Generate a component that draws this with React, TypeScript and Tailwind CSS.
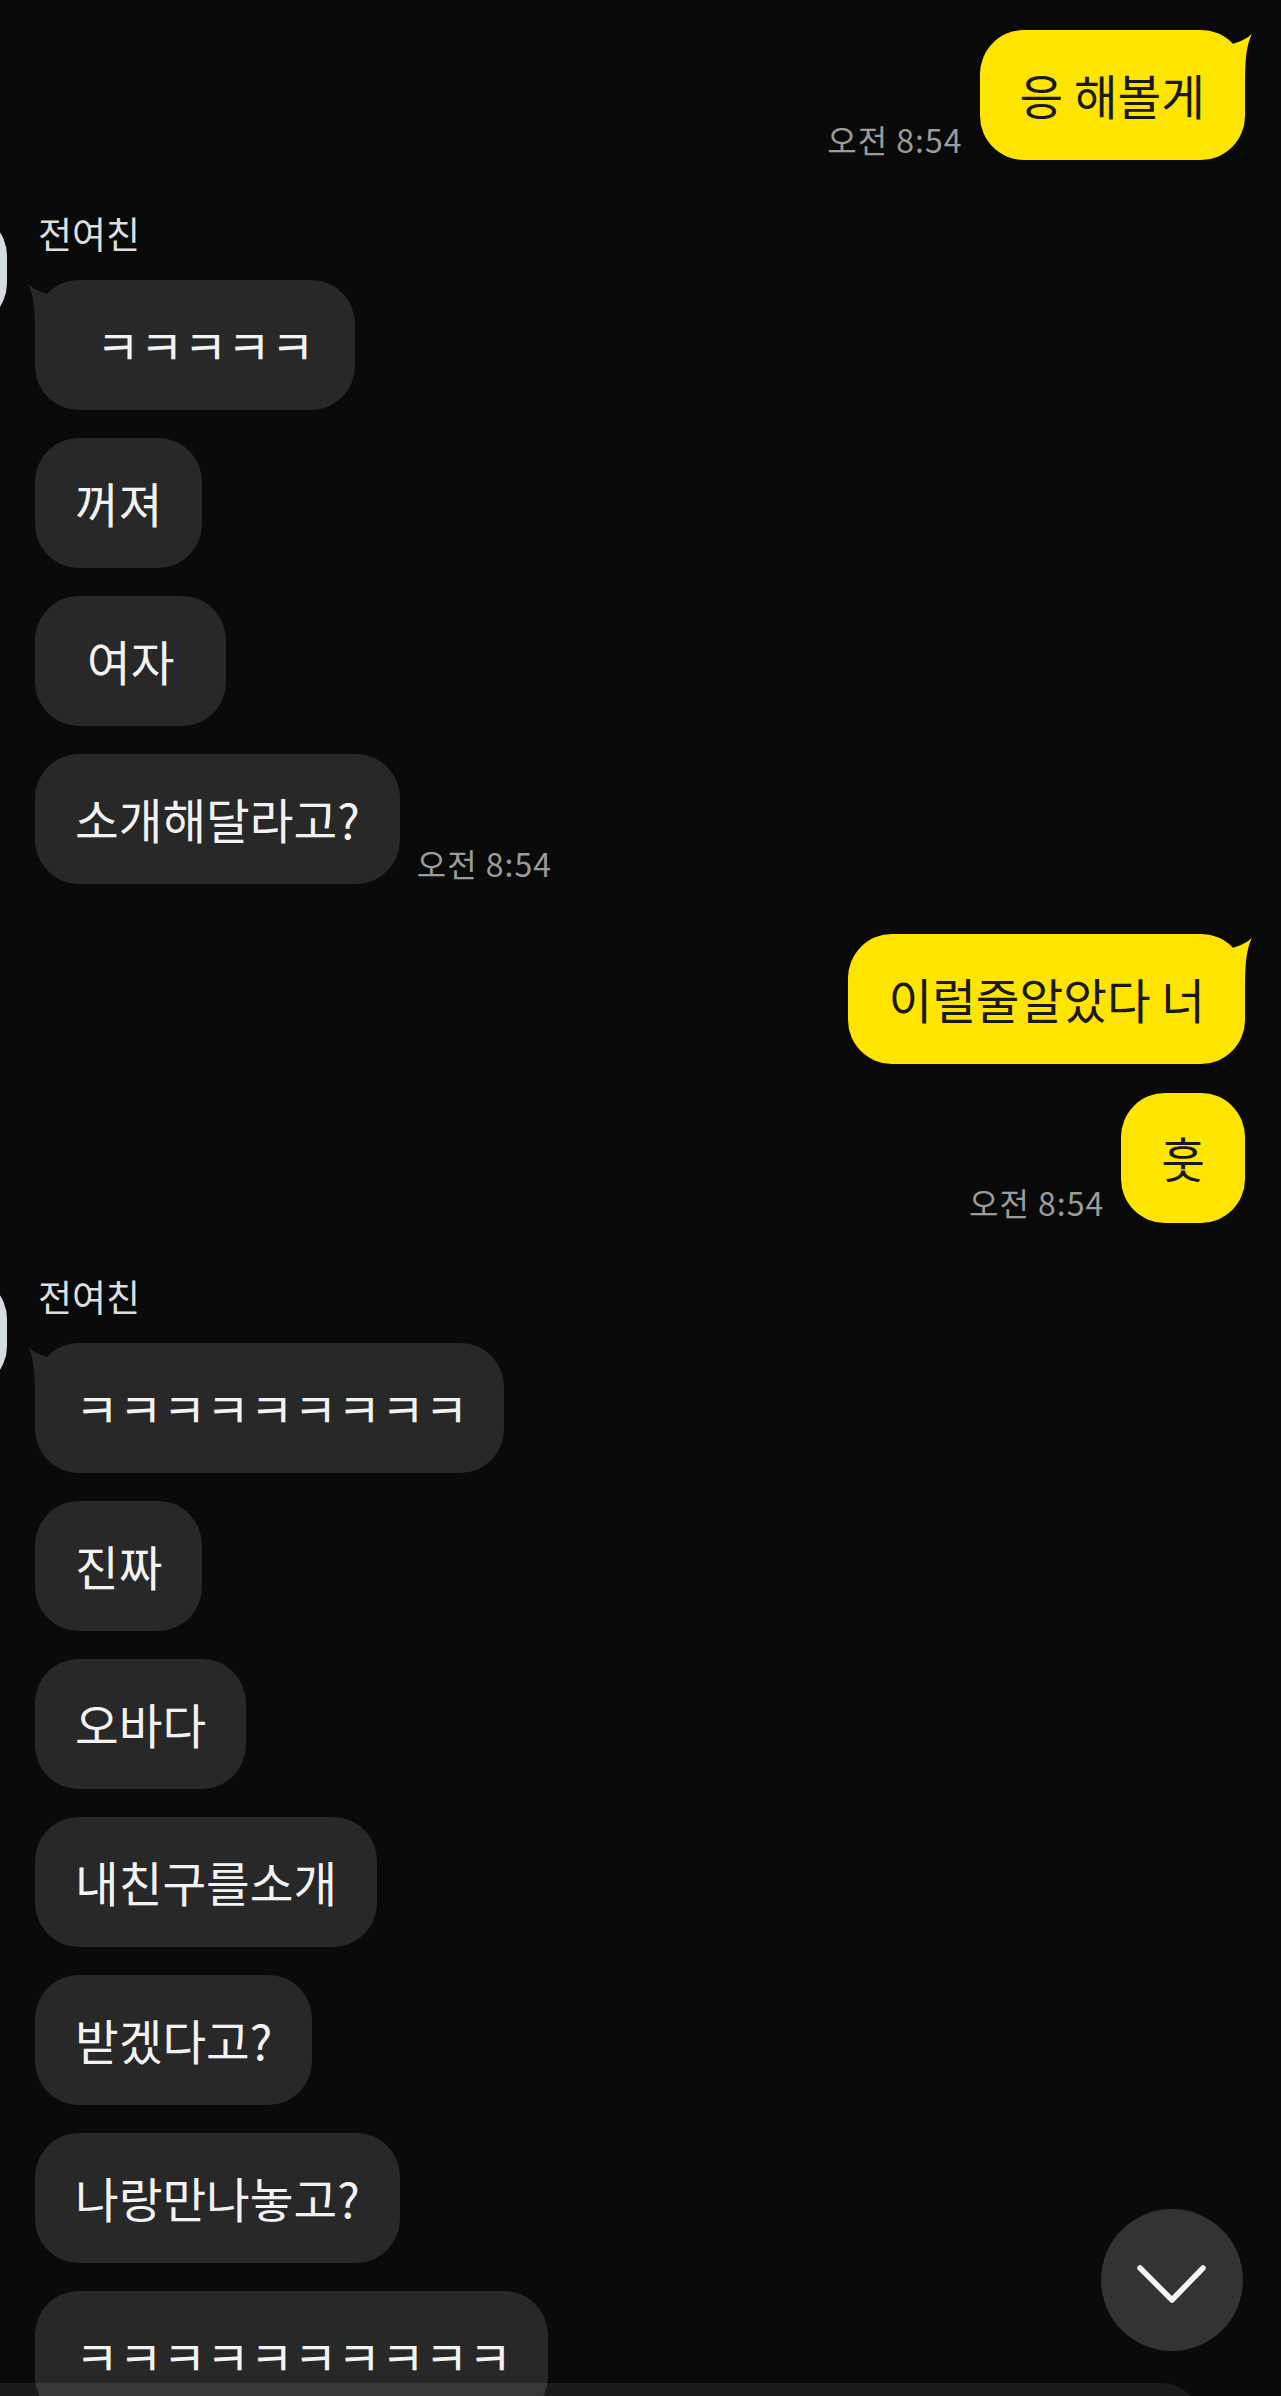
import React from 'react'

type Msg = { text: string; pad?: string }

const YELLOW = '#fee500'
const GRAY = '#282828'

function Tail({ side }: { side: 'left' | 'right' }) {
  if (side === 'right') {
    return (
      <svg className="absolute top-0 right-[-10px]" width="40" height="50" viewBox="0 0 40 50">
        <path d="M11 15 Q27 13 37 4 Q30 16 30 50 L11 50 Z" fill={YELLOW} />
      </svg>
    )
  }
  return (
    <svg className="absolute top-0 left-[-10px]" width="40" height="50" viewBox="0 0 40 50">
      <path d="M29 15 Q13 13 3 4 Q10 16 10 50 L29 50 Z" fill={GRAY} />
    </svg>
  )
}

function Bubble({ msg, mine, tail }: { msg: Msg; mine?: boolean; tail?: boolean }) {
  return (
    <div
      className={
        'relative rounded-[44px] py-[36px] text-[47.5px] leading-[58px] whitespace-pre ' +
        (msg.pad ?? 'px-[40px] ') +
        (mine ? 'bg-[#fee500] text-[#191919]' : 'bg-[#282828] text-[#f2f2f2]')
      }
    >
      {tail && <Tail side={mine ? 'right' : 'left'} />}
      <span className="relative">{msg.text}</span>
    </div>
  )
}

function Time({ children }: { children: string }) {
  return (
    <span className="mb-[3px] text-[32px] leading-[36px] tracking-[1px] text-[#9b9b9b] whitespace-nowrap">
      {children}
    </span>
  )
}

function MineGroup({ msgs, time, className = '' }: { msgs: Msg[]; time?: string; className?: string }) {
  return (
    <div className={'flex flex-col items-end gap-[29px] pr-[36px] ' + className}>
      {msgs.map((m, i) => (
        <div key={i} className="flex items-end gap-[17px]">
          {time && i === msgs.length - 1 && <Time>{time}</Time>}
          <Bubble msg={m} mine tail={i === 0} />
        </div>
      ))}
    </div>
  )
}

function OtherGroup({
  name,
  msgs,
  time,
  className = '',
}: {
  name: string
  msgs: Msg[]
  time?: string
  className?: string
}) {
  return (
    <div className={'flex items-start ' + className}>
      {/* 프로필 (화면 왼쪽에 잘려 있음) */}
      <div className="-ml-[108px] mt-[-1px] h-[115px] w-[115px] shrink-0 rounded-[44px] bg-[#d6dbe3]" />
      <div className="ml-[28px] flex flex-col">
        <div className="ml-[3px] text-[37px] leading-[40px] text-[#dedede]">{name}</div>
        <div className="mt-[27px] flex flex-col items-start gap-[28px]">
          {msgs.map((m, i) => (
            <div key={i} className="flex items-end gap-[17px]">
              <Bubble msg={m} tail={i === 0} />
              {time && i === msgs.length - 1 && <Time>{time}</Time>}
            </div>
          ))}
        </div>
      </div>
    </div>
  )
}

export default function App() {
  return (
    <div className="relative h-[2396px] w-[1281px] overflow-hidden bg-[#0a0a0a] font-['Noto_Sans_CJK_KR','Noto_Sans',sans-serif]">
      <div className="flex flex-col pt-[30px]">
        <MineGroup msgs={[{ text: '응 해볼게' }]} time="오전 8:54" />

        <OtherGroup
          className="mt-[53px]"
          name="전여친"
          msgs={[
            { text: 'ㅋㅋㅋㅋㅋ', pad: 'pl-[61px] pr-[40px] ' },
            { text: '꺼져' },
            { text: '여자', pad: 'pl-[52px] pr-[52px] ' },
            { text: '소개해달라고?' },
          ]}
          time="오전 8:54"
        />

        <MineGroup className="mt-[50px]" msgs={[{ text: '이럴줄알았다 너' }, { text: '훗' }]} time="오전 8:54" />

        <OtherGroup
          className="mt-[53px]"
          name="전여친"
          msgs={[
            { text: 'ㅋㅋㅋㅋㅋㅋㅋㅋㅋ', pad: 'pl-[40px] pr-[36px] ' },
            { text: '진짜' },
            { text: '오바다' },
            { text: '내친구를소개' },
            { text: '받겠다고?' },
            { text: '나랑만나놓고?' },
            { text: 'ㅋㅋㅋㅋㅋㅋㅋㅋㅋㅋ', pad: 'pl-[40px] pr-[36px] ' },
          ]}
        />
      </div>

      {/* 하단 입력창 가장자리 */}
      <div className="absolute left-0 top-[2383px] h-[60px] w-[1201px] rounded-tr-[40px] bg-white/[0.07]" />

      {/* 아래로 스크롤 버튼 */}
      <div className="absolute left-[1101px] top-[2209px] flex h-[142px] w-[142px] items-center justify-center rounded-full bg-[#333333]">
        <svg width="142" height="142" viewBox="0 0 142 142" fill="none">
          <path d="M39 59 L71 91 L102 59" stroke="#f5f5f5" strokeWidth="5.5" strokeLinecap="round" strokeLinejoin="round" />
        </svg>
      </div>
    </div>
  )
}
